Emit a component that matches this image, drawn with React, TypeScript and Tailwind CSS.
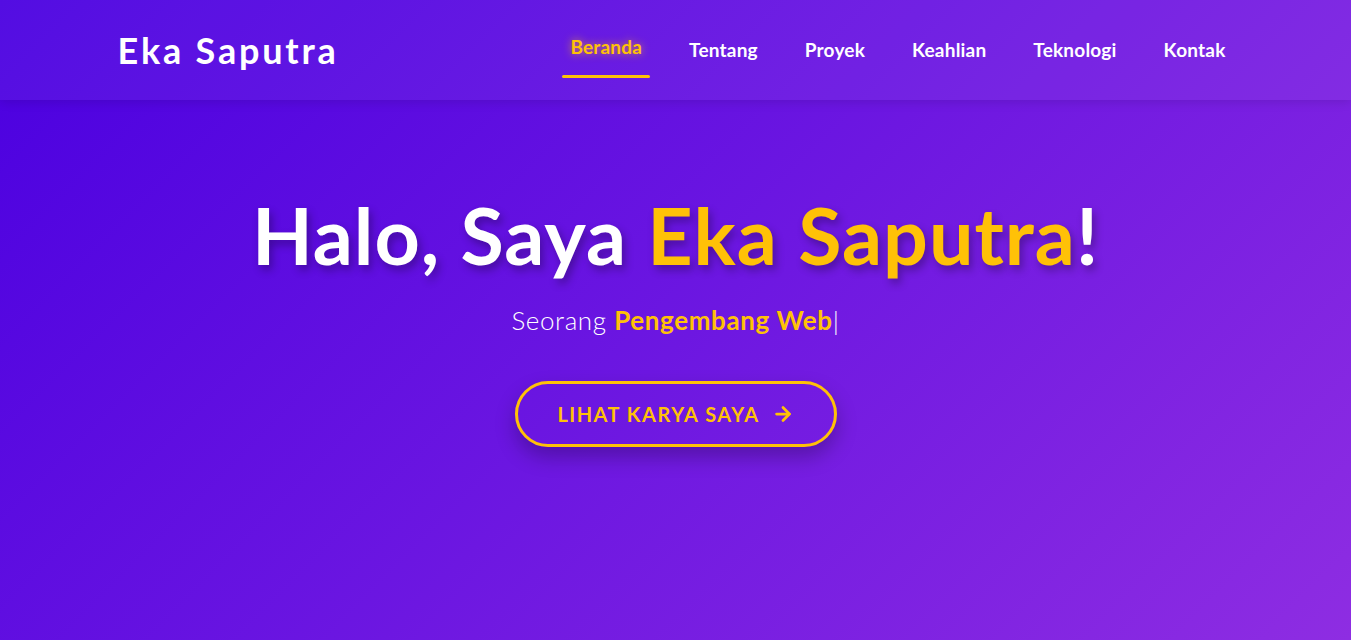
import { ArrowRight } from "lucide-react";

const links = ["Beranda", "Tentang", "Proyek", "Keahlian", "Teknologi", "Kontak"];

export default function App() {
    return (
        <div
            className="min-h-screen w-full bg-[linear-gradient(135deg,#4a00e0_0%,#8e2de2_100%)] text-white overflow-hidden"
            style={{ fontFamily: "Lato, 'Open Sans', sans-serif" }}
        >
            <header className="h-[100px] bg-white/[0.05] shadow-[0_2px_10px_rgba(0,0,0,0.12)]">
                <div className="max-w-[1140px] mx-auto px-[12px] h-full flex items-center justify-between">
                    <a className="text-[36px] font-bold tracking-[2.8px] leading-none">Eka Saputra</a>
                    <nav className="flex items-center gap-[31px]">
                        {links.map((l, i) => (
                            <a
                                key={l}
                                className={
                                    i === 0
                                        ? "relative px-2 py-2 text-[19px] font-bold tracking-[0.2px] text-[#ffc107] -translate-y-[3px] [text-shadow:0_0_8px_rgba(255,193,7,0.7)]"
                                        : "relative px-2 py-2 text-[19px] font-bold tracking-[0.2px] text-white"
                                }
                            >
                                {l}
                                {i === 0 && (
                                    <span className="absolute left-0 right-0 -bottom-[9px] h-[3px] bg-[#ffc107] rounded-sm" />
                                )}
                            </a>
                        ))}
                    </nav>
                </div>
            </header>

            <section className="flex flex-col items-center pt-[88px]">
                <h1 className="text-[79px] font-bold leading-[1.2] tracking-[1px] [text-shadow:3px_5px_8px_rgba(0,0,0,0.3)]">
                    Halo, Saya <span className="text-[#ffc107]">Eka Saputra</span>!
                </h1>
                <p className="mt-[24px] text-[26px] font-light leading-none tracking-[0.6px]">
                    Seorang <span className="font-bold text-[#ffc107]">Pengembang Web</span>
                    <span className="font-light">|</span>
                </p>
                <button className="mt-[48px] w-[322px] h-[66px] rounded-full border-[3px] border-[#ffc107] text-[#ffc107] text-[20px] font-bold tracking-[1.5px] uppercase flex items-center justify-center gap-3 shadow-[0_10px_20px_rgba(0,0,0,0.25)]">
                    Lihat Karya Saya
                    <ArrowRight className="w-[22px] h-[22px]" strokeWidth={3} />
                </button>
            </section>
        </div>
    );
}
